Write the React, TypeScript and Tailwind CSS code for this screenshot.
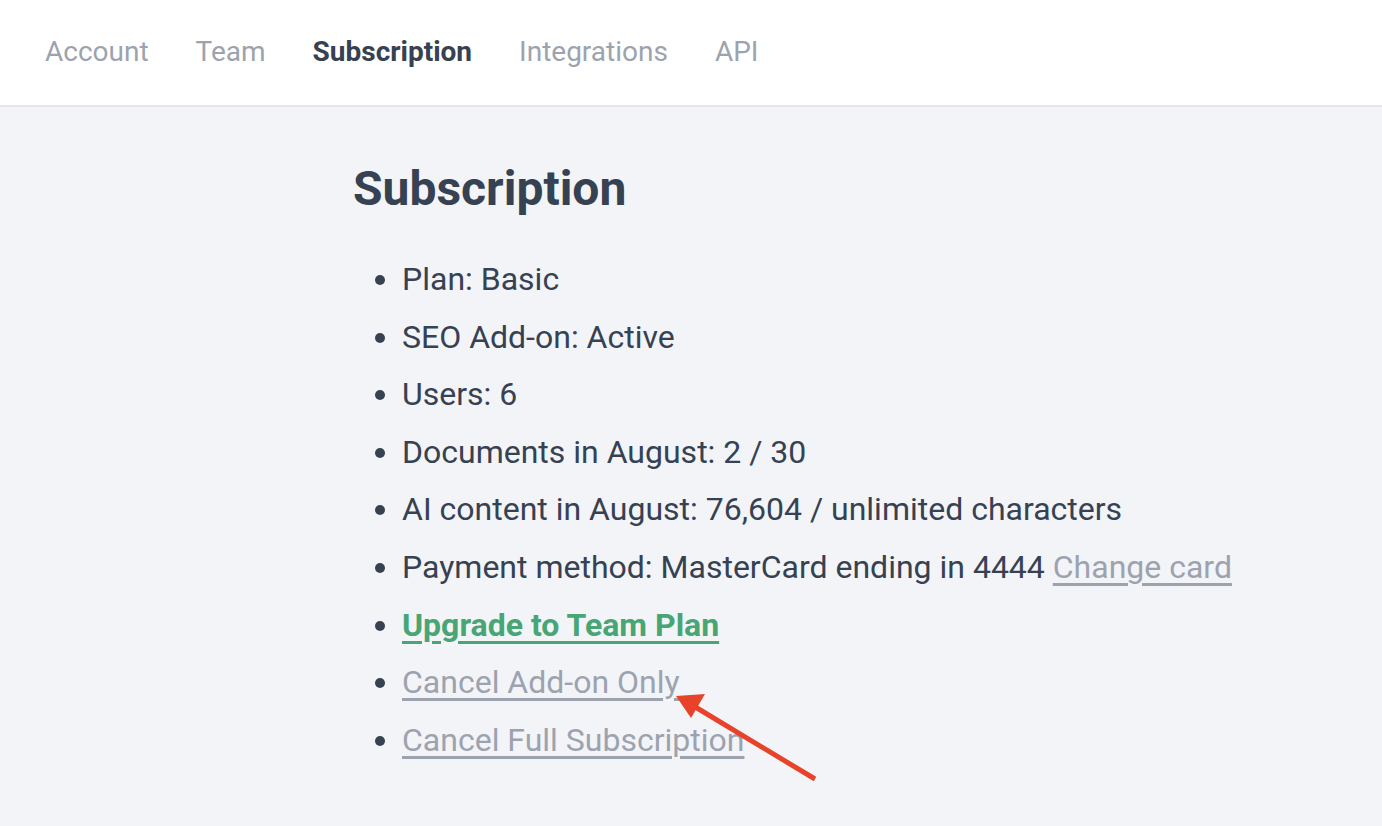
import React from "react";

export default function App() {
  const font = { fontFamily: "Roboto, 'Liberation Sans', sans-serif" };
  const tabs = ["Account", "Team", "Subscription", "Integrations", "API"];
  return (
    <div className="min-h-[826px] bg-[#f3f4f8] relative" style={font}>
      <header className="h-[107px] bg-white border-b-2 border-[#e5e7eb] flex items-center pl-[45px] gap-[47px]">
        {tabs.map((t) => (
          <a
            key={t}
            className={
              "text-[28px] leading-none pb-[2px] " +
              (t === "Subscription" ? "font-bold text-[#364152]" : "text-[#9ca3af]")
            }
          >
            {t}
          </a>
        ))}
      </header>
      <main className="pl-[353px] pt-[52px]">
        <h1 className="text-[48px] font-bold text-[#364152] leading-[60px]">Subscription</h1>
        <ul className="mt-[32px] list-disc pl-[49px] text-[32px] leading-[57.6px] text-[#364152] marker:text-[#364152]">
          <li>Plan: Basic</li>
          <li>SEO Add-on: Active</li>
          <li>Users: 6</li>
          <li>Documents in August: 2 / 30</li>
          <li>AI content in August: 76,604 / unlimited characters</li>
          <li>
            Payment method: MasterCard ending in 4444{" "}
            <a className="text-[#9ca3af] underline underline-offset-[5px] decoration-[3px]">Change card</a>
          </li>
          <li>
            <a className="text-[#48a574] font-bold underline underline-offset-[5px] decoration-[3px]">Upgrade to Team Plan</a>
          </li>
          <li>
            <a className="text-[#9ca3af] underline underline-offset-[5px] decoration-[3px]">Cancel Add-on Only</a>
          </li>
          <li>
            <a className="text-[#9ca3af] underline underline-offset-[5px] decoration-[3px]">Cancel Full Subscription</a>
          </li>
        </ul>
      </main>
      <svg className="absolute left-0 top-0 pointer-events-none" width="1382" height="826">
        <line x1="815" y1="779" x2="692" y2="705" stroke="#e8432a" strokeWidth="5" strokeLinecap="butt" />
        <polygon points="676,696 705,694 691,718" fill="#e8432a" />
      </svg>
    </div>
  );
}
